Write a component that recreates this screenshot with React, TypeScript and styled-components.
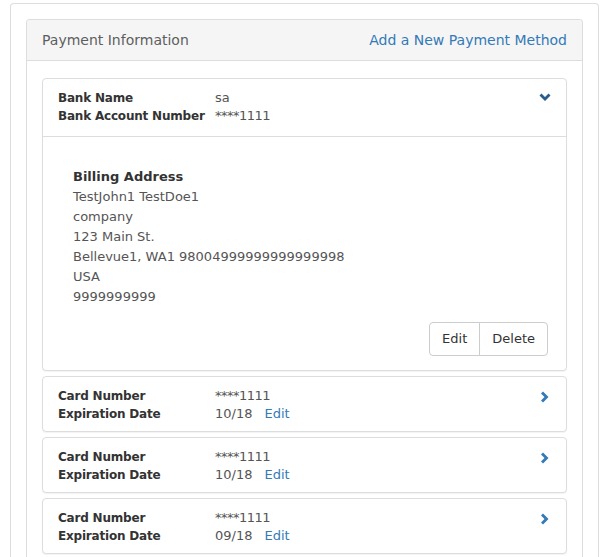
import React from 'react'
import styled, { createGlobalStyle } from 'styled-components'

const GlobalStyle = createGlobalStyle`
  html, body {
    margin: 0;
    padding: 0;
    background: #fff;
  }
  body {
    font-family: 'DejaVu Sans', 'Liberation Sans', sans-serif;
    font-size: 13px;
    color: #555;
  }
`

const Outer = styled.div`
  margin: 3px 5px 0 10px;
  padding: 15px 15px 0;
  border: 1px solid #ddd;
  border-bottom: none;
  border-radius: 4px 4px 0 0;
  height: 560px;
  box-sizing: border-box;
`

const Panel = styled.div`
  border: 1px solid #ddd;
  border-bottom: none;
  border-radius: 4px 4px 0 0;
  height: 100%;
`

const PanelHeading = styled.div`
  display: flex;
  justify-content: space-between;
  align-items: center;
  padding: 10px 15px;
  background: #f5f5f5;
  border-bottom: 1px solid #ddd;
  border-radius: 3px 3px 0 0;
  line-height: 20px;
  font-size: 14px;
`

const Title = styled.span`
  color: #5e5e5e;
`

const AddLink = styled.a`
  color: #337ab7;
  text-decoration: none;
  cursor: pointer;
`

const PanelBody = styled.div`
  display: flex;
  flex-direction: column;
  gap: 5px;
  padding: 17px 15px 0;
`

const Card = styled.div`
  border: 1px solid #ddd;
  border-radius: 4px;
  background: #fff;
  box-shadow: 0 1px 1px rgba(0, 0, 0, 0.05);
`

const CardHead = styled.div<{ $open?: boolean }>`
  display: flex;
  justify-content: space-between;
  align-items: flex-start;
  padding: ${({ $open }) => ($open ? '10px 15px 11px' : '10px 15px 8px')};
  border-bottom: ${({ $open }) => ($open ? '1px solid #ddd' : 'none')};
`

const Fields = styled.div`
  display: grid;
  grid-template-columns: 157px auto;
  line-height: 18px;
  white-space: nowrap;
`

const Label = styled.span`
  font-weight: bold;
  font-size: 12px;
  letter-spacing: -0.2px;
  color: #333;
`

const Value = styled.span`
  color: #555;
  display: flex;
  gap: 12px;
`

const Masked = styled.span`
  letter-spacing: -0.5px;
`

const InlineLink = styled.a`
  color: #337ab7;
  cursor: pointer;
`

const Toggle = styled.span`
  display: flex;
  width: 12px;
  height: 14px;
  margin-top: 4px;
  justify-content: center;
`

const CardBody = styled.div`
  padding: 15px 18px 14px 15px;
  display: flex;
  flex-direction: column;
`

const Address = styled.div`
  padding: 15px;
  line-height: 20px;
  font-size: 13px;
  color: #555;
`

const AddressTitle = styled.div`
  font-weight: bold;
  color: #333;
`

const ButtonGroup = styled.div`
  display: flex;
  align-self: flex-end;
`

const GroupButton = styled.button`
  font-family: inherit;
  font-size: 13px;
  line-height: 20px;
  color: #333;
  background: #fff;
  border: 1px solid #ccc;
  padding: 6px 12px;
  cursor: pointer;

  &:first-child {
    border-radius: 4px 0 0 4px;
  }
  &:last-child {
    border-radius: 0 4px 4px 0;
    margin-left: -1px;
  }
`

const ChevronDown = () => (
  <svg width="12" height="9" viewBox="0 0 12 9">
    <path d="M0.5 2.5 L2.5 0.5 L6 4 L9.5 0.5 L11.5 2.5 L6 8 Z" fill="#2a5d8f" />
  </svg>
)

const ChevronRight = () => (
  <svg width="8" height="12" viewBox="0 0 8 12">
    <path d="M2 0.5 L7.5 6 L2 11.5 L0 9.5 L3.5 6 L0 2.5 Z" fill="#337ab7" />
  </svg>
)

const cards = [
  { number: '****1111', expiry: '10/18' },
  { number: '****1111', expiry: '10/18' },
  { number: '****1111', expiry: '09/18' },
]

export default function App() {
  return (
    <>
      <GlobalStyle />
      <Outer>
        <Panel>
          <PanelHeading>
            <Title>Payment Information</Title>
            <AddLink>Add a New Payment Method</AddLink>
          </PanelHeading>
          <PanelBody>
            <Card>
              <CardHead $open>
                <Fields>
                  <Label>Bank Name</Label>
                  <Value>sa</Value>
                  <Label>Bank Account Number</Label>
                  <Value>
                    <Masked>****1111</Masked>
                  </Value>
                </Fields>
                <Toggle>
                  <ChevronDown />
                </Toggle>
              </CardHead>
              <CardBody>
                <Address>
                  <AddressTitle>Billing Address</AddressTitle>
                  <div>TestJohn1 TestDoe1</div>
                  <div>company</div>
                  <div>123 Main St.</div>
                  <div>Bellevue1, WA1 98004999999999999998</div>
                  <div>USA</div>
                  <div>9999999999</div>
                </Address>
                <ButtonGroup>
                  <GroupButton>Edit</GroupButton>
                  <GroupButton>Delete</GroupButton>
                </ButtonGroup>
              </CardBody>
            </Card>
            {cards.map((c, i) => (
              <Card key={i}>
                <CardHead>
                  <Fields>
                    <Label>Card Number</Label>
                    <Value>
                      <Masked>{c.number}</Masked>
                    </Value>
                    <Label>Expiration Date</Label>
                    <Value>
                      {c.expiry}
                      <InlineLink>Edit</InlineLink>
                    </Value>
                  </Fields>
                  <Toggle>
                    <ChevronRight />
                  </Toggle>
                </CardHead>
              </Card>
            ))}
          </PanelBody>
        </Panel>
      </Outer>
    </>
  )
}
